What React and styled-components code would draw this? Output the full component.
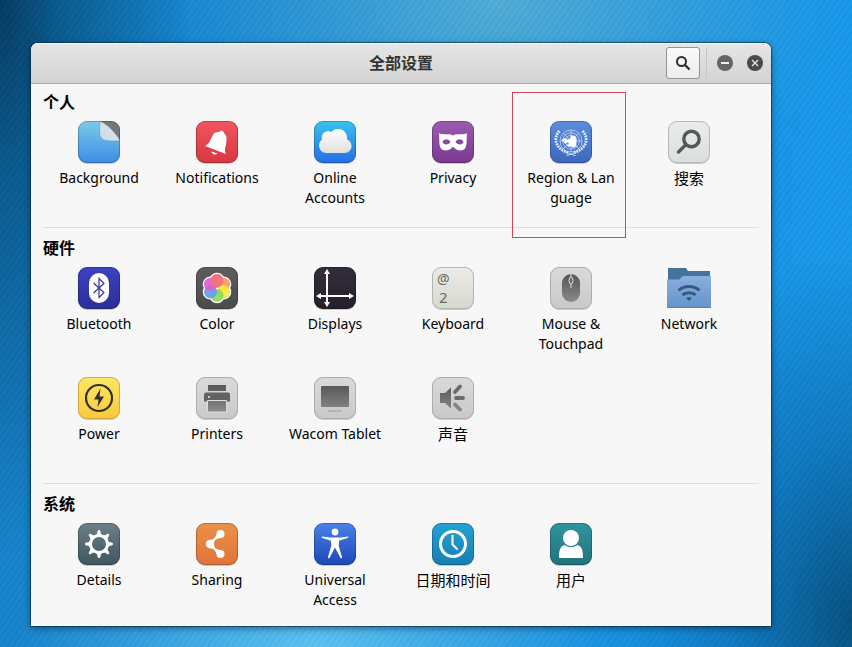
import React from "react";
import styled, { createGlobalStyle } from "styled-components";

const GlobalStyle = createGlobalStyle`
  * { box-sizing: border-box; }
  body { margin: 0; }
  body, button {
    font-family: "Noto Sans", "Noto Sans CJK SC", sans-serif;
    font-size: 14px;
    line-height: 20px;
    color: #000;
  }
`;

const Desktop = styled.div`
  display: flex;
  min-height: 100vh;
  padding: 43px 81px 21px 31px;
  background:
    repeating-linear-gradient(125deg, rgba(0, 40, 90, 0.04) 0 2px, rgba(255, 255, 255, 0.02) 2px 5px),
    radial-gradient(ellipse 190px 560px at 0 0, #04395f 0, rgba(5, 78, 125, 0.8) 30%, rgba(8, 100, 160, 0)),
    radial-gradient(ellipse 330px 240px at 500px 0, rgba(80, 172, 214, 1), rgba(50, 150, 205, 0)),
    radial-gradient(ellipse 300px 160px at 315px 100%, rgba(92, 194, 242, 1), rgba(50, 160, 225, 0)),
    radial-gradient(ellipse 230px 370px at 100% 96%, #05507f, rgba(5, 90, 150, 0.55) 45%, rgba(4, 90, 150, 0)),
    linear-gradient(90deg, #1683cb 0, #1488d6 45%, #1898ea 100%);
`;

const Window = styled.main`
  display: flex;
  flex-direction: column;
  flex: 1;
  min-width: 0;
  background: #f7f7f7;
  border-radius: 7px 7px 0 0;
  box-shadow: 0 0 0 1px rgba(0, 40, 70, 0.55), 0 2px 7px rgba(0, 20, 40, 0.55);
`;

const HeaderBar = styled.header`
  display: grid;
  grid-template-columns: 1fr auto 1fr;
  align-items: center;
  height: 41px;
  border-bottom: 1px solid #a9a9a9;
  border-radius: 7px 7px 0 0;
  background: linear-gradient(#e6e6e6, #d3d3d3);
  box-shadow: inset 0 1px #f7f7f7;
`;

const Title = styled.h1`
  grid-column: 2;
  margin: 0;
  font-size: 16px;
  font-weight: 700;
  color: #333;
`;

const HeaderActions = styled.div`
  display: flex;
  align-items: center;
  justify-content: flex-end;
  padding-right: 8px;
`;

const SearchButton = styled.button`
  display: grid;
  place-items: center;
  width: 34px;
  height: 32px;
  padding: 0;
  border: 1px solid #929595;
  border-radius: 3px;
  background: linear-gradient(#fbfbfb, #ececec);
`;

const Separator = styled.span`
  width: 1px;
  height: 32px;
  margin: 0 10px 0 6px;
  background: #c6c6c6;
`;

const RoundButton = styled.button`
  display: grid;
  place-items: center;
  width: 16px;
  height: 16px;
  margin-left: ${(p) => (p.$spaced ? 14 : 0)}px;
  padding: 0;
  border: 0;
  border-radius: 50%;
  background: ${(p) => p.$tone};
`;

const Content = styled.div`
  padding: 0 12px;
`;

const Section = styled.section`
  padding: 10px 0 19px;
  border-bottom: 1px solid #dcdcdc;

  &:first-child { padding-top: 8px; }
  &:last-child { padding-bottom: 15px; border-bottom: 0; }
`;

const SectionTitle = styled.h2`
  margin: 0 0 6px;
  font-size: 16px;
  line-height: 20px;
  font-weight: 700;
  color: #000;
`;

const PanelGrid = styled.div`
  display: grid;
  grid-template-columns: repeat(6, minmax(0, 1fr));
  gap: 20px 0;
  margin: 0 11px 0 -3px;
`;

const PanelButton = styled.button`
  position: relative;
  display: flex;
  flex-direction: column;
  align-items: center;
  gap: 2px;
  min-height: 90px;
  padding: 0;
  border: 0;
  background: none;
  text-align: center;
`;

const PanelLabel = styled.span`
  display: block;
  font-size: ${(p) => (p.$cjk ? 15 : 14)}px;
  white-space: pre-line;
`;

const Highlight = styled.span`
  position: absolute;
  top: -26px;
  left: 0;
  right: 4px;
  height: 146px;
  border: 1px solid #d5485a;
  pointer-events: none;
`;

const Glyph = styled.svg`
  display: block;
  width: 48px;
  height: 48px;
`;

function Icon({ id, from, to, edge = "rgba(0,0,0,0.22)", children }) {
  return (
    <Glyph viewBox="0 0 48 48" aria-hidden="true">
      <defs>
        <linearGradient id={id} x1="0" y1="0" x2="0" y2="1">
          <stop offset="0" stopColor={from} />
          <stop offset="1" stopColor={to} />
        </linearGradient>
      </defs>
      <rect x="3" y="4" width="42" height="42" rx="9" fill="#000" opacity="0.18" />
      <rect x="3" y="3" width="42" height="42" rx="9" fill={`url(#${id})`} />
      {children}
      <rect x="3.5" y="3.5" width="41" height="41" rx="8.5" fill="none" stroke={edge} />
    </Glyph>
  );
}

const grey = { from: "#dadada", to: "#c9c9c9", edge: "#adadad" };

function GreyInk({ id }) {
  return (
    <defs>
      <linearGradient id={id} gradientUnits="userSpaceOnUse" x1="0" y1="10" x2="0" y2="38">
        <stop offset="0" stopColor="#555" />
        <stop offset="1" stopColor="#8a8a8a" />
      </linearGradient>
    </defs>
  );
}

const BackgroundIcon = () => (
  <Icon id="bg" from="#7ccbe8" to="#3d8ce4">
    <defs>
      <linearGradient id="curl" x1="0" y1="1" x2="1" y2="0">
        <stop offset="0" stopColor="#c6d9ea" />
        <stop offset="1" stopColor="#e3e9ee" />
      </linearGradient>
    </defs>
    <path d="M25 3H36a9 9 0 0 1 9 9V23Z" fill="#777" />
    <path d="M25 3C32 6 42 16 45 23H34Q24.500 23 24.500 14Z" fill="url(#curl)" stroke="#6d92b4" strokeWidth="0.6" />
  </Icon>
);

const BellIcon = () => (
  <Icon id="bell" from="#ef5560" to="#d83842">
    <path d="M12 28C17 25.500 17.500 21 20 17C21.500 14 24.500 14 26.500 14C27.500 11.800 31 12.600 31 15.200C34.500 18 33.800 22 33 26C32.300 30 31 32 33 36Z" fill="#fff" />
    <path d="M18.500 33.500L24.500 35.500C23 37.500 19 36.800 18.500 33.500Z" fill="#fff" />
  </Icon>
);

const CloudIcon = () => (
  <Icon id="cloud" from="#38c3ef" to="#256ee6">
    <defs>
      <linearGradient id="cloudFill" gradientUnits="userSpaceOnUse" x1="0" y1="11" x2="0" y2="35">
        <stop offset="0" stopColor="#fff" />
        <stop offset="1" stopColor="#e0e0e0" />
      </linearGradient>
    </defs>
    <path fill="url(#cloudFill)" d="M15.500 35C11 35 8 31.500 8 27.500C8 25 9 22.800 11 21.500C9.800 17 13 12.800 17.500 13.200C18.800 13.300 19.500 13.500 20.500 14C22.500 11.500 25 11 27.500 11C32 11 35 14 36 18.500C36.300 19.700 36.200 20.500 36 21.500C38.800 22.500 40.500 25 40.500 28C40.500 32 37.500 35 33.500 35Z" />
  </Icon>
);

const MaskIcon = () => (
  <Icon id="mask" from="#9a5cb0" to="#7b3990">
    <path fill="#fff" fillRule="evenodd" d="M10 15C12 17 18 15.800 22 16.500L24 17.500L26 16.500C30 15.800 36 17 38 15C37.300 20 38.500 27 36 30.500C33 34 27 32.500 24 28.500C21 32.500 15 34 12 30.500C9.500 27 10.700 20 10 15ZM13.500 24C14.500 27.500 20 27 21.500 24C20 20 14.500 20.500 13.500 24ZM34.500 24C33.500 20.500 28 20 26.500 24C28 27 33.500 27.500 34.500 24Z" />
  </Icon>
);

const GlobeIcon = () => (
  <Icon id="un" from="#5d8edb" to="#3b66bd">
    <g fill="none" stroke="#d3e1f8" strokeWidth="0.7">
      <circle cx="24" cy="23" r="11" />
      <circle cx="24" cy="23" r="8.300" />
      <circle cx="24" cy="23" r="5.600" />
      <circle cx="24" cy="23" r="2.800" />
      <path d="M24 12V34M13 23H35M16.200 15.200L31.800 30.800M31.800 15.200L16.200 30.800" />
    </g>
    <path fill="#fff" d="M14.500 21.500L18 20L20.500 21.500L23 21.500L23.500 18.500L27 17.500L29.500 20L29 24L29.500 28L26 30L24.500 28L21 29L20 27.500L23 25L20.500 24.500L18.500 26Z" />
    <g fill="none" stroke="#dfe9fb">
      <path d="M12.500 13C5.500 20 8.500 31.500 22 35M35.500 13C42.500 20 39.500 31.500 26 35" strokeWidth="2.8" strokeDasharray="1.9 0.8" />
      <path d="M19.500 37.500C23 37 26 35.500 28.500 33.800M28.500 37.500C25 37 22 35.500 19.500 33.800" strokeWidth="0.9" />
    </g>
  </Icon>
);

const SearchIcon = () => (
  <Icon id="find" from="#e9ecea" to="#dadfdd" edge="#b5bab9">
    <g fill="none" stroke="#555856" strokeLinecap="round" strokeWidth="3.4">
      <circle cx="26.500" cy="21" r="7.700" />
      <path d="M20.500 27L13.500 34" />
    </g>
  </Icon>
);

const BluetoothIcon = () => (
  <Icon id="bt" from="#3e42c4" to="#2b2f98">
    <rect x="14" y="9" width="20" height="30" rx="10" fill="#fff" />
    <path d="M18.500 19L29 28.500L24 33.500V14.500L29 19.500L18.500 29" fill="none" stroke="#32349d" strokeWidth="1.2" />
  </Icon>
);

const petals = [
  [24, 16.5, "#f0737c"],
  [30.5, 20.2, "#f69a5e"],
  [30.5, 27.8, "#f8e93d"],
  [24, 31.5, "#8bdb52"],
  [17.5, 27.8, "#5f9fe8"],
  [17.5, 20.2, "#df5bd2"],
];

const ColorIcon = () => (
  <Icon id="color" from="#5d5d5d" to="#4b4b4b">
    {petals.map(([x, y, c]) => <circle key={`w${c}`} cx={x} cy={y} r="7.800" fill="#fff" />)}
    {petals.map(([x, y, c]) => <circle key={c} cx={x} cy={y} r="6.500" fill={c} opacity="0.92" />)}
    <path d="M24 10A6.500 6.500 0 0 1 28 21.500L24 24C20 23 17.500 20 17.500 16.500A6.500 6.500 0 0 1 24 10Z" fill="#f0737c" opacity="0.9" />
  </Icon>
);

const DisplaysIcon = () => (
  <Icon id="disp" from="#342c3a" to="#251f2b">
    <path d="M16 8V40M8 32H40" stroke="#fff" strokeWidth="2" />
    <path d="M16 5L19 10H13ZM16 43L13 38H19ZM5 32L10 29V35ZM43 32L38 35V29Z" fill="#fff" />
  </Icon>
);

const KeyGlyph = styled.text`
  font-family: "Noto Sans", sans-serif;
  font-size: ${(p) => p.$size}px;
  fill: #686a66;
`;

const KeyboardIcon = () => (
  <Icon id="kbd" from="#ebece8" to="#d6d9ce" edge="#b4b7b0">
    <KeyGlyph x="8" y="20" $size={14}>@</KeyGlyph>
    <KeyGlyph x="10" y="39" $size={15}>2</KeyGlyph>
  </Icon>
);

const MouseIcon = () => (
  <Icon id="mouse" {...grey}>
    <GreyInk id="mouseInk" />
    <rect x="15" y="10" width="18" height="28" rx="9" fill="url(#mouseInk)" />
    <path d="M24 10V13M24 20V24" stroke="#e2e2e2" />
    <ellipse cx="24" cy="16.500" rx="2" ry="3.500" fill="#666" stroke="#e2e2e2" />
  </Icon>
);

const NetworkIcon = () => (
  <Glyph viewBox="0 0 48 48" aria-hidden="true">
    <defs>
      <linearGradient id="folder" x1="0" y1="0" x2="0" y2="1">
        <stop offset="0" stopColor="#8aaede" />
        <stop offset="1" stopColor="#6594cc" />
      </linearGradient>
    </defs>
    <path d="M3 4H21L23 7H45V20H3Z" fill="#44749b" />
    <path d="M2 15.500H14L18 12H46V44H2Z" fill="url(#folder)" />
    <path d="M2 43.500H46" stroke="#5283b6" />
    <g fill="none" stroke="#355c80" strokeWidth="3">
      <path d="M13.500 26.500C19 21 29 21 34.500 26.500" />
      <path d="M17.500 31C21 28 27 28 30.500 31" />
    </g>
    <path d="M21 34C23 32.500 25 32.500 27 34L24 37Z" fill="#355c80" />
  </Glyph>
);

const PowerIcon = () => (
  <Icon id="power" from="#fde765" to="#f8c93d" edge="#d3a940">
    <circle cx="24" cy="24" r="13" fill="none" stroke="#33302b" strokeWidth="2.2" />
    <path d="M25.500 14.500L19 25.500H23.500L22.500 33L29 22.500H24.500Z" fill="#33302b" />
  </Icon>
);

const PrinterIcon = () => (
  <Icon id="print" {...grey}>
    <GreyInk id="printInk" />
    <path d="M15 11H33V17H15Z" fill="url(#printInk)" />
    <path d="M13 18.500H35a2 2 0 0 1 2 2V27.500H11V20.500a2 2 0 0 1 2-2Z" fill="#626262" />
    <path d="M14.500 26.500H33.500V38H14.500Z" fill="url(#printInk)" stroke="#dedede" />
    <circle cx="16" cy="23" r="1" fill="#eee" />
  </Icon>
);

const TinyBrand = styled.text`
  font-family: "Noto Sans", sans-serif;
  font-size: 4px;
  fill: #888;
`;

const TabletIcon = () => (
  <Icon id="tablet" {...grey}>
    <GreyInk id="tabletInk" />
    <rect x="10" y="12" width="28" height="21" rx="1" fill="url(#tabletInk)" />
    <TinyBrand x="24" y="38" textAnchor="middle">wacom</TinyBrand>
  </Icon>
);

const SoundIcon = () => (
  <Icon id="sound" {...grey}>
    <GreyInk id="soundInk" />
    <path d="M11 19H16L22 13.500V34.500L16 29H11Z" fill="url(#soundInk)" />
    <g stroke="#6b6b6b" strokeWidth="3.8" strokeLinecap="round">
      <path d="M26 18L31 12.500M27 24H34" />
      <path d="M26 30.500L31 35.500" stroke="#858585" />
    </g>
  </Icon>
);

const GearIcon = () => (
  <Icon id="gear" from="#6c7f86" to="#3f5761">
    <circle cx="24" cy="24" r="8.500" fill="none" stroke="#fff" strokeWidth="3" />
    {[0, 45, 90, 135, 180, 225, 270, 315].map((a) => (
      <path key={a} d="M20 15.500C22 14.500 22.500 13 22.500 11Q24 9 25.500 11C25.500 13 26 14.500 28 15.500Z" fill="#fff" transform={`rotate(${a} 24 24)`} />
    ))}
  </Icon>
);

const ShareIcon = () => (
  <Icon id="share" from="#eb9148" to="#e0733a">
    <g fill="#fff">
      <circle cx="27.500" cy="14" r="4" />
      <circle cx="17" cy="24" r="4.200" />
      <circle cx="27.500" cy="34" r="4" />
      <path d="M16 20Q22 20 23.500 14L28 18Q20.800 18.500 20.800 24Q20.800 29.500 28 30L23.500 34Q22 28 16 28Z" />
    </g>
  </Icon>
);

const AccessIcon = () => (
  <Icon id="access" from="#4b80ea" to="#1b49b8">
    <circle cx="24" cy="12" r="3.400" fill="#fff" />
    <path fill="#fff" d="M10.800 16.500L19 17.500H29L37.200 16.500V17.800L28 20.800L27.800 26L31.200 37.800L29.800 38.500L24 27.500L18.200 38.500L16.800 37.800L20.200 26L20 20.800L10.800 17.800Z" />
  </Icon>
);

const ClockIcon = () => (
  <Icon id="clock" from="#25a1d6" to="#177fb3">
    <circle cx="24" cy="24" r="12.500" fill="none" stroke="#fff" strokeWidth="3" />
    <path d="M23.500 15V24.500L28.500 29.500" fill="none" stroke="#fff" strokeWidth="2" strokeLinejoin="round" />
  </Icon>
);

const UserIcon = () => (
  <Icon id="user" from="#2f949f" to="#22737c">
    <circle cx="24" cy="18" r="8" fill="#fff" />
    <path d="M12 38C12 30 13 26.500 17.500 25Q24 29.500 30.500 25C35 26.500 36 30 36 38Z" fill="#fff" />
  </Icon>
);

const sections = [
  {
    title: "个人",
    panels: [
      { label: "Background", icon: BackgroundIcon },
      { label: "Notifications", icon: BellIcon },
      { label: "Online\nAccounts", icon: CloudIcon },
      { label: "Privacy", icon: MaskIcon },
      { label: "Region & Lan\nguage", icon: GlobeIcon, marked: true },
      { label: "搜索", icon: SearchIcon, cjk: true },
    ],
  },
  {
    title: "硬件",
    panels: [
      { label: "Bluetooth", icon: BluetoothIcon },
      { label: "Color", icon: ColorIcon },
      { label: "Displays", icon: DisplaysIcon },
      { label: "Keyboard", icon: KeyboardIcon },
      { label: "Mouse &\nTouchpad", icon: MouseIcon },
      { label: "Network", icon: NetworkIcon },
      { label: "Power", icon: PowerIcon },
      { label: "Printers", icon: PrinterIcon },
      { label: "Wacom Tablet", icon: TabletIcon },
      { label: "声音", icon: SoundIcon, cjk: true },
    ],
  },
  {
    title: "系统",
    panels: [
      { label: "Details", icon: GearIcon },
      { label: "Sharing", icon: ShareIcon },
      { label: "Universal\nAccess", icon: AccessIcon },
      { label: "日期和时间", icon: ClockIcon, cjk: true },
      { label: "用户", icon: UserIcon, cjk: true },
    ],
  },
];

export default function App() {
  return (
    <>
      <GlobalStyle />
      <Desktop lang="zh-CN">
        <Window>
          <HeaderBar>
            <Title>全部设置</Title>
            <HeaderActions>
              <SearchButton aria-label="搜索设置">
                <svg width="16" height="16" viewBox="0 0 16 16" fill="none" stroke="#2b2f30">
                  <circle cx="6.500" cy="6.500" r="4.500" strokeWidth="2" />
                  <path d="M9.500 9.500L14.500 14.500" strokeWidth="2.4" />
                </svg>
              </SearchButton>
              <Separator />
              <RoundButton aria-label="最小化" $tone="#656565">
                <svg width="16" height="16" viewBox="0 0 16 16">
                  <path d="M4 8H12" stroke="#eee" strokeWidth="2" />
                </svg>
              </RoundButton>
              <RoundButton aria-label="关闭" $tone="#4a4a4a" $spaced>
                <svg width="16" height="16" viewBox="0 0 16 16">
                  <path d="M5 5L11 11M11 5L5 11" stroke="#e8e8e8" strokeWidth="1.3" />
                </svg>
              </RoundButton>
            </HeaderActions>
          </HeaderBar>
          <Content>
            {sections.map((section) => (
              <Section key={section.title}>
                <SectionTitle>{section.title}</SectionTitle>
                <PanelGrid>
                  {section.panels.map(({ label, icon: PanelIcon, cjk, marked }) => (
                    <PanelButton key={label}>
                      <PanelIcon />
                      <PanelLabel $cjk={cjk}>{label}</PanelLabel>
                      {marked && <Highlight />}
                    </PanelButton>
                  ))}
                </PanelGrid>
              </Section>
            ))}
          </Content>
        </Window>
      </Desktop>
    </>
  );
}
